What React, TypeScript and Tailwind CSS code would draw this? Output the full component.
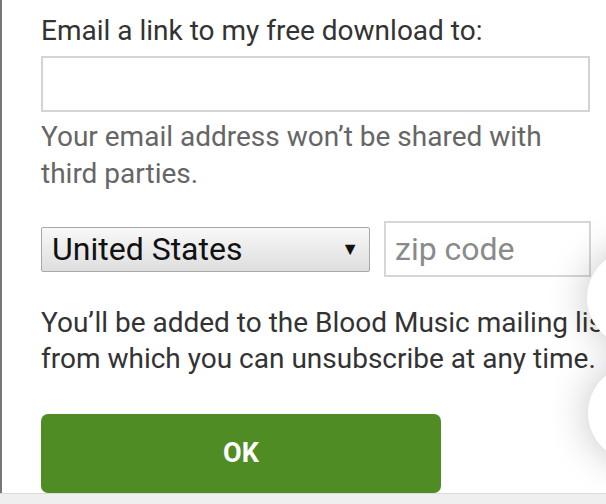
import React from 'react';

// Floating round buttons peeking in from the right edge
function FloatingCircle({ className }: { className: string }) {
  return (
    <div
      className={`absolute w-[96px] h-[96px] rounded-full bg-white shadow-[0_0_40px_rgba(0,0,0,0.24)] ${className}`}
    />
  );
}

export default function App() {
  return (
    <div
      className="relative w-[606px] h-[504px] overflow-hidden bg-white flex flex-col"
      style={{ fontFamily: 'Roboto, "Noto Sans", sans-serif' }}
    >
      <div className="flex-1 border-l-2 border-[#777] pl-[39px] pt-[12px] overflow-hidden">
        {/* Email */}
        <label className="block text-[28px] leading-[37px] text-[#333]">
          Email a link to my free download to:
        </label>
        <input
          type="email"
          className="block mt-[7px] w-[549px] h-[56px] border-2 border-[#d4d4d4] bg-white outline-none px-3 text-[28px]"
        />
        <p className="mt-[6px] w-[549px] text-[28px] leading-[37px] text-[#666]">
          Your email address won’t be shared with third parties.
        </p>

        {/* Country + zip */}
        <div className="mt-[29px] flex items-center gap-[14px] h-[56px]">
          <div className="relative w-[329px] h-[45px] rounded-[2px] border border-[#a8a8a8] bg-gradient-to-b from-[#f8f8f8] to-[#dedede] flex items-center pl-[10px]">
            <span className="text-[32px] leading-none text-[#111]">United States</span>
            <span className="absolute right-[10px] top-1/2 -translate-y-1/2 text-[18px] leading-none text-[#111]">
              ▼
            </span>
          </div>
          <input
            type="text"
            placeholder="zip code"
            className="w-[207px] h-[56px] border-2 border-[#d6d6d6] bg-white outline-none pl-[9px] text-[32px] text-[#333] placeholder:text-[#8a8a8a]"
          />
        </div>

        {/* Mailing list notice */}
        <p className="mt-[28px] w-[620px] text-[28px] leading-[36px] text-[#333]">
          You’ll be added to the Blood Music mailing list, from which you can unsubscribe at any time.
        </p>

        <button className="mt-[37px] w-[400px] h-[79px] rounded-[7px] bg-[#4f8c23] text-white text-[27px] font-bold">
          OK
        </button>
      </div>

      <div className="h-[11px] bg-[#efefef] border-t border-[#dcdcdc]" />

      <FloatingCircle className="left-[587px] top-[250px]" />
      <FloatingCircle className="left-[588px] top-[365px]" />
    </div>
  );
}
